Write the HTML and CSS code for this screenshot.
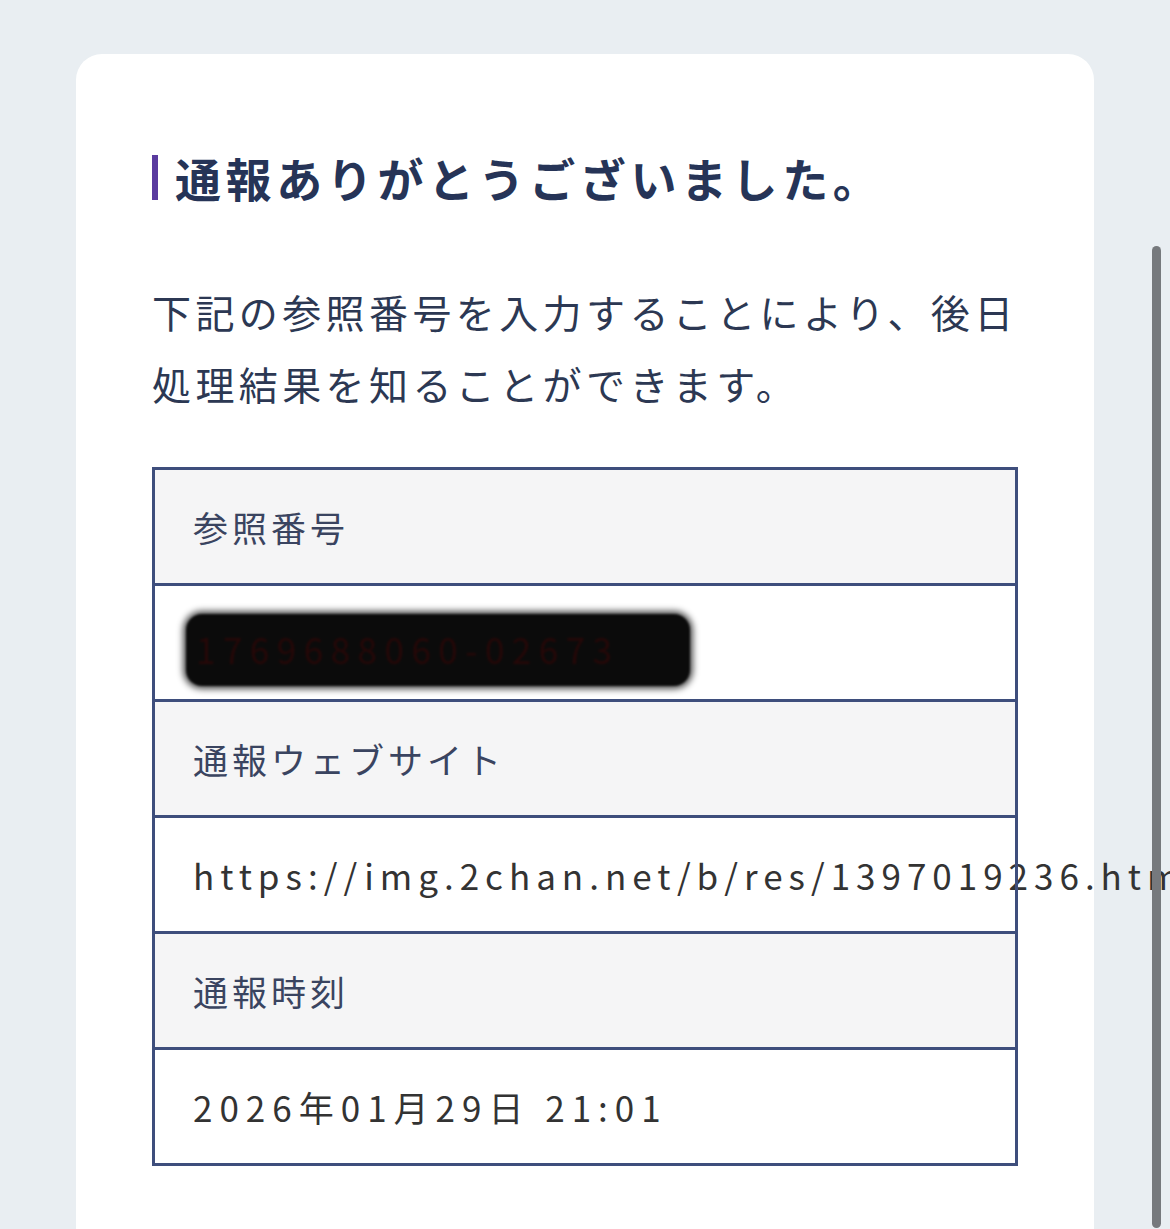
FILE: index.html
```html
<!DOCTYPE html>
<html lang="ja">
<head>
<meta charset="utf-8">
<title>通報ありがとうございました。</title>
<link rel="stylesheet" href="styles.css">
</head>
<body>
<main class="page">
  <section class="card">
    <h1 class="title"><span class="title-bar"></span><span class="title-text">通報ありがとうございました。</span></h1>
    <p class="lead">下記の参照番号を入力することにより、後日処理結果を知ることができます。</p>
    <div class="info">
      <div class="row row-head">参照番号</div>
      <div class="row row-value"><span class="redact">1769688060-02673</span></div>
      <div class="row row-head">通報ウェブサイト</div>
      <div class="row row-value row-url">https://img.2chan.net/b/res/1397019236.htm</div>
      <div class="row row-head">通報時刻</div>
      <div class="row row-value row-date">2026年01月29日 21:01</div>
    </div>
  </section>
</main>
<div class="scrollbar"></div>
</body>
</html>
```

FILE: styles.css
```css
html, body {
  margin: 0;
  padding: 0;
  height: 100%;
  overflow: hidden;
}

body {
  background: #e9eef2;
  font-family: "Noto Sans CJK JP", "Noto Sans", sans-serif;
  color: #2c3853;
}

.page {
  padding: 54px 76px 0 76px;
}

.card {
  background: #ffffff;
  border-radius: 26px 26px 0 0;
  padding: 93px 76px 80px 76px;
  min-height: 1200px;
  box-sizing: border-box;
}

.title {
  margin: 0;
  display: flex;
  align-items: center;
  gap: 17px;
  height: 60px;
}

.title-bar {
  width: 6px;
  height: 45px;
  background: #5a3b9f;
  flex: none;
}

.title-text {
  font-size: 46px;
  font-weight: 700;
  letter-spacing: 4.6px;
  color: #263457;
  line-height: 60px;
}

.lead {
  margin: 68px 0 0 0;
  font-size: 39px;
  line-height: 72px;
  letter-spacing: 4.4px;
  color: #2c3853;
  font-weight: 400;
}

.info {
  position: relative;
  margin-top: 48px;
  border: 3px solid #3e4e7c;
  width: 866px;
  box-sizing: border-box;
}

.info::after {
  content: "";
  position: absolute;
  top: -3px;
  right: -3px;
  bottom: -3px;
  width: 3px;
  background: #3e4e7c;
  z-index: 1;
}

.row {
  height: 113px;
  display: flex;
  align-items: center;
  padding-left: 38px;
  font-size: 35px;
  letter-spacing: 4px;
  white-space: nowrap;
  box-sizing: content-box;
}

.row + .row {
  border-top: 3px solid #3e4e7c;
}

.row-head {
  background: #f5f5f6;
  color: #3a4460;
}

.row-value {
  background: #ffffff;
  color: #333333;
  letter-spacing: 6px;
}

.row-date {
  letter-spacing: 7px;
}

.redact {
  display: inline-block;
  background: #0b0b0b;
  color: #260808;
  letter-spacing: 7.5px;
  border-radius: 16px;
  padding: 9px 70px 11px 10px;
  margin-left: -7px;
  margin-top: 15px;
  box-shadow: 0 0 6px 3px rgba(0, 0, 0, 0.7);
  line-height: 52px;
  filter: blur(0.8px);
}

.scrollbar {
  position: fixed;
  top: 246px;
  right: 9px;
  width: 9px;
  height: 982px;
  border-radius: 5px;
  background: #76797d;
  z-index: 2;
}
```
